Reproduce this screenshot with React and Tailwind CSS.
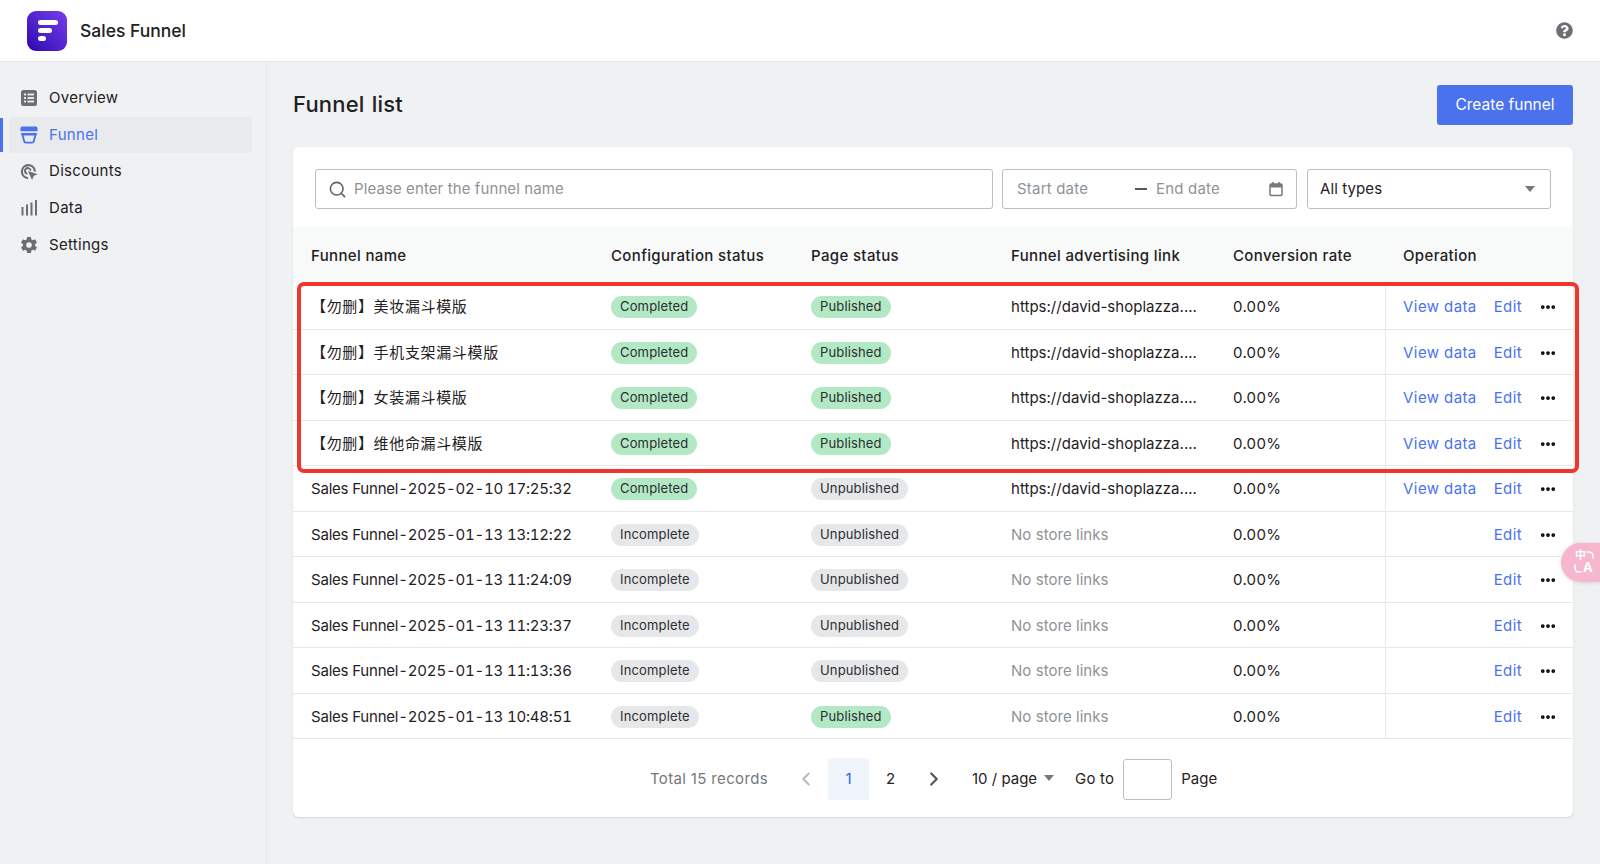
import React from 'react';
import { Search, ChevronLeft, ChevronRight, Ellipsis } from 'lucide-react';
import { IoSettingsSharp } from 'react-icons/io5';
import { FaQuestionCircle } from 'react-icons/fa';

const font = { fontFamily: 'Inter, "Noto Sans CJK SC", sans-serif' };

const OverviewIcon = () => (
    <svg width="18" height="18" viewBox="0 0 18 18">
        <rect x="1" y="1" width="16" height="16" rx="2.5" fill="#6b6e73" />
        <g fill="#f0f1f3">
            <rect x="4" y="4.6" width="2" height="1.8" />
            <rect x="7.5" y="4.6" width="6.5" height="1.8" />
            <rect x="4" y="8.1" width="2" height="1.8" />
            <rect x="7.5" y="8.1" width="6.5" height="1.8" />
            <rect x="4" y="11.6" width="2" height="1.8" />
            <rect x="7.5" y="11.6" width="6.5" height="1.8" />
        </g>
    </svg>
);

const FunnelIcon = () => (
    <svg width="18" height="18" viewBox="0 0 18 18" fill="#4a72ee">
        <path d="M2 .6h14a1.5 1.5 0 0 1 1.5 1.5v3.2H.5V2.1A1.5 1.5 0 0 1 2 .6z" />
        <path d="M1 7h16l-.5 2.6H1.5z" />
        <path d="M2.6 9l1.5 6a2 2 0 0 0 2 1.6h5.8a2 2 0 0 0 2-1.6l1.5-6" fill="none" stroke="#4a72ee" strokeWidth="1.8" />
    </svg>
);

const DiscountIcon = () => (
    <svg width="20" height="20" viewBox="0 0 20 20" fill="none">
        <path d="M8 16.6a7.2 7.2 0 1 1 8.4-8.2" stroke="#6b6e73" strokeWidth="2.4" strokeLinecap="round" />
        <path d="M7.4 11.8a3.2 3.2 0 1 1 4.2-4.2" stroke="#6b6e73" strokeWidth="2.2" strokeLinecap="round" />
        <path d="M8.8 8.8l11 3.6-4.4 1.9-2 4.7z" fill="#6b6e73" />
    </svg>
);

const DataIcon = () => (
    <svg width="18" height="18" viewBox="0 0 18 18" fill="#6b6e73">
        <rect x="1.5" y="8" width="2" height="8.5" />
        <rect x="6" y="5.5" width="2" height="11" />
        <rect x="10.5" y="3.5" width="2" height="13" />
        <rect x="15" y="1" width="2" height="15.5" />
    </svg>
);

const CalendarIcon = () => (
    <svg width="16" height="16" viewBox="0 0 16 16" fill="none">
        <rect x="2" y="3" width="12" height="11.5" rx="1.2" stroke="#75787d" strokeWidth="1.5" />
        <rect x="2" y="3" width="12" height="3.5" fill="#75787d" />
        <rect x="4.2" y="1" width="1.6" height="3" fill="#75787d" />
        <rect x="10.2" y="1" width="1.6" height="3" fill="#75787d" />
    </svg>
);

const Caret = () => (
    <div className="w-0 h-0 border-l-[5.5px] border-r-[5.5px] border-t-[6px] border-l-transparent border-r-transparent border-t-[#75787d]" />
);

const navItems = [
    { label: 'Overview', icon: <OverviewIcon /> },
    { label: 'Funnel', icon: <FunnelIcon />, active: true },
    { label: 'Discounts', icon: <DiscountIcon /> },
    { label: 'Data', icon: <DataIcon /> },
    { label: 'Settings', icon: <IoSettingsSharp className="w-[20px] h-[20px] text-[#6b6e73]" /> },
];

const LINK = 'https://david-shoplazza....';
const NO_LINK = 'No store links';

const rows = [
    { name: '【勿删】美妆漏斗模版', cjk: true, cfg: 'Completed', page: 'Published', link: LINK, view: true },
    { name: '【勿删】手机支架漏斗模版', cjk: true, cfg: 'Completed', page: 'Published', link: LINK, view: true },
    { name: '【勿删】女装漏斗模版', cjk: true, cfg: 'Completed', page: 'Published', link: LINK, view: true },
    { name: '【勿删】维他命漏斗模版', cjk: true, cfg: 'Completed', page: 'Published', link: LINK, view: true },
    { name: 'Sales Funnel-2025-02-10 17:25:32', cfg: 'Completed', page: 'Unpublished', link: LINK, view: true },
    { name: 'Sales Funnel-2025-01-13 13:12:22', cfg: 'Incomplete', page: 'Unpublished', link: NO_LINK },
    { name: 'Sales Funnel-2025-01-13 11:24:09', cfg: 'Incomplete', page: 'Unpublished', link: NO_LINK },
    { name: 'Sales Funnel-2025-01-13 11:23:37', cfg: 'Incomplete', page: 'Unpublished', link: NO_LINK },
    { name: 'Sales Funnel-2025-01-13 11:13:36', cfg: 'Incomplete', page: 'Unpublished', link: NO_LINK },
    { name: 'Sales Funnel-2025-01-13 10:48:51', cfg: 'Incomplete', page: 'Published', link: NO_LINK },
];

const Pill = ({ text }) => {
    const green = text === 'Completed' || text === 'Published';
    return (
        <span className={`inline-flex items-center h-[22px] px-[9px] rounded-full text-[13px] tracking-[0.15px] text-[#2c2e30] ${green ? 'bg-[#b2e8c4]' : 'bg-[#e6e7e9]'}`}>
            {text}
        </span>
    );
};

const cols = 'grid grid-cols-[318px_200px_200px_222px_152px_188px]';

export default function App() {
    return (
        <div className="relative w-[1600px] h-[864px] overflow-hidden flex flex-col bg-[#f0f1f3] text-[15px] text-[#1f2123]" style={font}>
            <header className="h-[62px] shrink-0 bg-white border-b border-[#e3e4e6] flex items-center justify-between pl-[27px] pr-[27px]">
                <div className="flex items-center gap-[13px]">
                    <div className="w-[40px] h-[40px] rounded-[9px] bg-gradient-to-tr from-[#3000b0] to-[#7a3bec] flex flex-col justify-center gap-[3px] pl-[11px]">
                        <div className="w-[20px] h-[5px] rounded-full bg-white" />
                        <div className="w-[14px] h-[5px] rounded-full bg-white" />
                        <div className="w-[8px] h-[5px] rounded-full bg-white" />
                    </div>
                    <span className="text-[17.5px] font-medium pt-[2px]">Sales Funnel</span>
                </div>
                <FaQuestionCircle className="w-[17px] h-[17px] text-[#6b6e73]" />
            </header>

            <div className="flex flex-1 min-h-0">
                <aside className="w-[267px] shrink-0 border-r border-[#e5e6e8] pt-[18px] pr-[14px] tracking-[0.3px]">
                    {navItems.map((item) => (
                        <div key={item.label} className="relative h-[36.7px] pl-[9px]">
                            {item.active && <div className="absolute left-0 top-[1px] bottom-[1px] w-[3px] bg-[#4a72ee]" />}
                            <div className={`h-full flex items-center gap-[11px] pl-[11px] rounded-[3px] ${item.active ? 'bg-[#e9eaed] text-[#4a72ee]' : ''}`}>
                                <span className="w-[18px] flex justify-center">{item.icon}</span>
                                <span>{item.label}</span>
                            </div>
                        </div>
                    ))}
                </aside>

                <main className="flex-1 pl-[26px] pr-[27px] pt-[23px]">
                    <div className="flex items-center justify-between h-[40px] mb-[22px]">
                        <h1 className="text-[22px] font-medium tracking-[0.2px] [word-spacing:1px] pb-[2px]">Funnel list</h1>
                        <button className="w-[136px] h-[40px] rounded-[3px] bg-[#4a72ee] text-white text-[15.5px]">Create funnel</button>
                    </div>

                    <section className="relative w-[1280px] bg-white rounded-[6px] shadow-[0_1px_2px_rgba(0,0,0,0.12)]">
                        <div className="flex pt-[22px] pl-[22px] pb-[18px]">
                            <div className="w-[678px] h-[40px] border border-[#bcbec2] rounded-[3px] flex items-center pl-[12px] gap-[7px]">
                                <Search className="w-[19px] h-[19px] text-[#5f6266]" strokeWidth={2} />
                                <span className="text-[#8f9296] tracking-[0.1px]">Please enter the funnel name</span>
                            </div>
                            <div className="w-[295px] h-[40px] ml-[9px] border border-[#bcbec2] rounded-[3px] flex items-center pl-[14px] text-[#8f9296] tracking-[0.2px]">
                                <span className="w-[118px]">Start date</span>
                                <span className="w-[12px] h-[1.5px] bg-[#55585c] mr-[9px]" />
                                <span className="w-[112px]">End date</span>
                                <CalendarIcon />
                            </div>
                            <div className="w-[244px] h-[40px] ml-[10px] border border-[#bcbec2] rounded-[3px] flex items-center justify-between pl-[12px] pr-[15px] tracking-[0.1px]">
                                <span>All types</span>
                                <Caret />
                            </div>
                        </div>

                        <div className={`${cols} h-[57px] items-center bg-[#f8f9f9] font-medium tracking-[0.35px] pt-[1px]`}>
                            <div className="pl-[18px]">Funnel name</div>
                            <div>Configuration status</div>
                            <div>Page status</div>
                            <div>Funnel advertising link</div>
                            <div>Conversion rate</div>
                            <div className="pl-[18px]">Operation</div>
                        </div>

                        {rows.map((r) => (
                            <div key={r.name} className={`${cols} h-[45.5px] items-center border-b border-[#e6e7e9]`}>
                                <div className={`pl-[18px] pt-[2px] whitespace-nowrap tabular-nums ${r.cjk ? 'tracking-[0.65px]' : 'tracking-[-0.2px]'}`}>{r.name}</div>
                                <div className="pt-[1px]"><Pill text={r.cfg} /></div>
                                <div className="pt-[1px]"><Pill text={r.page} /></div>
                                <div className={`pt-[2px] ${r.link === NO_LINK ? 'text-[#8f9296] tracking-[0.05px]' : 'tracking-[0.02px]'}`}>{r.link}</div>
                                <div className="pt-[2px] tracking-[0.3px]">0.00%</div>
                                <div className="h-full border-l border-[#e6e7e9] flex items-center justify-end pr-[16px] pt-[2px] text-[#4a72ee] tracking-[0.4px]">
                                    {r.view && <span className="mr-[17px]">View data</span>}
                                    <span className="mr-[17px]">Edit</span>
                                    <Ellipsis className="w-[18px] h-[18px] text-black" strokeWidth={3} />
                                </div>
                            </div>
                        ))}

                        <div className="h-[78px] flex items-center pl-[357px] pt-[2px]">
                            <span className="text-[#75787d] tracking-[0.35px] w-[145px]">Total 15 records</span>
                            <ChevronLeft className="w-[22px] h-[22px] text-[#b6b8bb]" />
                            <div className="w-[41px] h-[42px] ml-[11px] rounded-[3px] bg-[#eff4fb] text-[#2f62d8] flex items-center justify-center">1</div>
                            <div className="w-[43px] h-[42px] flex items-center justify-center">2</div>
                            <ChevronRight className="w-[22px] h-[22px] text-[#55585c] ml-[11px]" strokeWidth={2.5} />
                            <span className="ml-[27px]">10 / page</span>
                            <span className="ml-[7px] mb-[3px]"><Caret /></span>
                            <span className="ml-[21px] tracking-[0.2px]">Go to</span>
                            <div className="w-[49px] h-[41px] ml-[9px] border border-[#bcbec2] rounded-[3px]" />
                            <span className="ml-[9px]">Page</span>
                        </div>

                        {/* annotation over the first four rows */}
                        <div className="absolute left-[4px] top-[135px] w-[1282px] h-[191px] border-[4px] border-[#f2342e] rounded-[7px] pointer-events-none" />
                    </section>
                </main>
            </div>

            <div className="absolute left-[1561px] top-[543px] w-[39px] h-[39px] rounded-l-full bg-[#f6b6cd] shadow-[0_1px_4px_rgba(0,0,0,0.12)] text-white font-bold">
                <span className="absolute left-[14px] top-[7px] text-[11px] leading-[11px]">中</span>
                <span className="absolute left-[22px] top-[18px] text-[13px] leading-[13px]">A</span>
                <svg className="absolute left-[12px] top-[7px]" width="22" height="25" viewBox="0 0 22 25" fill="none" stroke="#fff" strokeWidth="1.6" strokeLinecap="round">
                    <path d="M14 2h2a4 4 0 0 1 4 4v2" />
                    <path d="M2 15v3a4 4 0 0 0 4 4h2" />
                </svg>
            </div>
        </div>
    );
}
